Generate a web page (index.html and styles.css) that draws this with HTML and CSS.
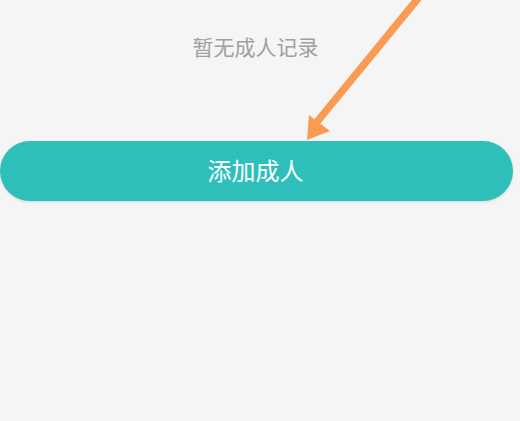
FILE: index.html
```html
<!DOCTYPE html>
<html lang="zh">
<head>
<meta charset="utf-8">
<link rel="stylesheet" href="styles.css">
</head>
<body>
<div class="page">
  <p class="empty">暂无成人记录</p>
  <div class="btn-wrap">
    <button class="add-btn">添加成人</button>
  </div>
  <svg class="arrow" width="520" height="160" viewBox="0 0 520 160">
    <line x1="420" y1="-4" x2="312" y2="128" stroke="#fb9a52" stroke-width="7.5" stroke-linecap="butt"/>
    <polygon points="307,140 309,115 330,131" fill="#fb9a52"/>
  </svg>
</div>
</body>
</html>
```
FILE: styles.css
```css
html, body {
  margin: 0;
  padding: 0;
  background: #f5f5f5;
}
.page {
  position: relative;
  width: 520px;
  height: 421px;
  overflow: hidden;
  font-family: "Noto Sans CJK SC", "Noto Sans", sans-serif;
}
.empty {
  margin: 0;
  padding: 32px 9px 0 0;
  height: 28px;
  line-height: 28px;
  text-align: center;
  font-size: 21px;
  color: #a0a0a0;
}
.btn-wrap {
  padding: 81px 7px 0 0;
}
.add-btn {
  display: block;
  width: 513px;
  height: 60px;
  border: none;
  border-radius: 30px;
  background: #2ebfbb;
  color: #ffffff;
  font-family: "Noto Sans CJK SC", "Noto Sans", sans-serif;
  font-size: 24px;
  padding: 0 2px 3px 0;
  box-shadow: 0 1px 3px rgba(0,0,0,0.12);
}
.arrow {
  position: absolute;
  left: 0;
  top: 0;
}
```
